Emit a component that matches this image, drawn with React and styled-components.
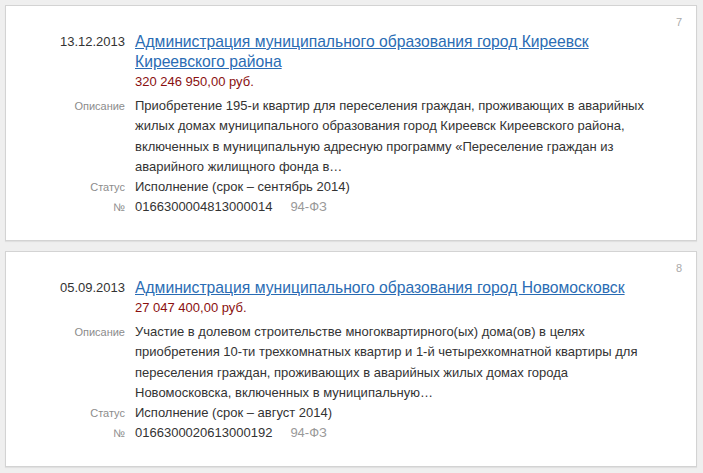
import styled, { createGlobalStyle } from "styled-components";

const GlobalStyle = createGlobalStyle`
    body {
        margin: 0;
        background: #efefef;
        font-family: "Liberation Sans", Arial, sans-serif;
    }
`;

const purchases = [
    {
        num: 7,
        date: "13.12.2013",
        title: "Администрация муниципального образования город Киреевск Киреевского района",
        price: "320 246 950,00 руб.",
        text: "Приобретение 195-и квартир для переселения граждан, проживающих в аварийных жилых домах муниципального образования город Киреевск Киреевского района, включенных в муниципальную адресную программу «Переселение граждан из аварийного жилищного фонда в…",
        status: "Исполнение (срок – сентябрь 2014)",
        code: "0166300004813000014",
        law: "94-ФЗ",
    },
    {
        num: 8,
        date: "05.09.2013",
        title: "Администрация муниципального образования город Новомосковск",
        price: "27 047 400,00 руб.",
        text: "Участие в долевом строительстве многоквартирного(ых) дома(ов) в целях приобретения 10-ти трехкомнатных квартир и 1-й четырехкомнатной квартиры для переселения граждан, проживающих в аварийных жилых домах города Новомосковска, включенных в муниципальную…",
        status: "Исполнение (срок – август 2014)",
        code: "0166300020613000192",
        law: "94-ФЗ",
    },
];

function App() {
    return (
        <>
            <GlobalStyle />
            <List>
                {purchases.map((p) => (
                    <Card key={p.num}>
                        <Num>{p.num}</Num>
                        <Grid>
                            <DateCell>{p.date}</DateCell>
                            <div>
                                <Title href="#">{p.title}</Title>
                                <Price>{p.price}</Price>
                            </div>

                            <Label>Описание</Label>
                            <Text>{p.text}</Text>

                            <Label>Статус</Label>
                            <Value>{p.status}</Value>

                            <Label>№</Label>
                            <Value>
                                {p.code}
                                <Law>{p.law}</Law>
                            </Value>
                        </Grid>
                    </Card>
                ))}
            </List>
        </>
    );
}

const List = styled.div`
    padding: 5px 6px 5px 5px;
    display: flex;
    flex-direction: column;
    gap: 10px;
`;

const Card = styled.div`
    position: relative;
    background: #fff;
    border: 1px solid #d3d3d3;
    box-shadow: 0 1px 1px rgba(0, 0, 0, 0.06);
    padding: 26px 40px 23px 0;
`;

const Num = styled.span`
    position: absolute;
    top: 10px;
    right: 14px;
    font-size: 11px;
    color: #aaa;
`;

const Grid = styled.div`
    display: grid;
    grid-template-columns: 119px 520px;
    column-gap: 10px;
    font-size: 13px;
    line-height: 20px;
    color: #333;
`;

const DateCell = styled.div`
    text-align: right;
    color: #333;
    font-size: 13px;
    line-height: 20px;
`;

const Title = styled.a`
    display: block;
    font-size: 15.7px;
    line-height: 20px;
    color: #2a6cb4;
    text-decoration: underline;
`;

const Price = styled.div`
    color: #8a1010;
    line-height: 19px;
    margin-bottom: 5px;
`;

const Label = styled.div`
    text-align: right;
    font-size: 11px;
    color: #8c8c8c;
`;

const Text = styled.div`
    line-height: 20.3px;
`;

const Value = styled.div``;

const Law = styled.span`
    color: #999;
    margin-left: 18px;
`;

export default App;
